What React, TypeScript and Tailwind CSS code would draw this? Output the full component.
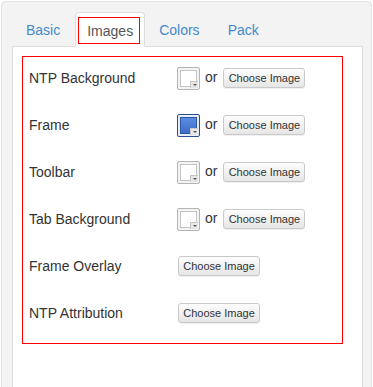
import React from "react";

function Swatch({ blue }: { blue?: boolean }) {
  return (
    <div
      className={
        "relative w-[23px] h-[23px] rounded-[2px] border " +
        (blue
          ? "border-[#2a4f94] bg-[#e8ecf4]"
          : "border-[#b4b4b4] bg-[#f4f4f4]")
      }
    >
      <div
        className={
          "absolute left-[2px] top-[2px] w-[17px] h-[17px] border " +
          (blue
            ? "border-[#2a55a8] bg-gradient-to-b from-[#5d8de0] to-[#3d6cc9]"
            : "border-[#c4c4c4] bg-white")
        }
      />
      <div className="absolute right-[1px] bottom-[1px] w-[8px] h-[7px] bg-[#e6e6e6] border-l border-t border-[#c8c8c8] flex items-center justify-center">
        <div className="w-0 h-0 border-l-[2px] border-r-[2px] border-t-[2px] border-l-transparent border-r-transparent border-t-[#555]" />
      </div>
    </div>
  );
}

function Btn() {
  return (
    <button className="h-[20px] w-[82px] rounded-[3px] border border-[#c9c9c9] bg-gradient-to-b from-[#fdfdfd] to-[#e6e6e6] text-[11px] text-[#333] leading-none shadow-[0_1px_0_rgba(0,0,0,0.06)]">
      Choose Image
    </button>
  );
}

const rows: { label: string; swatch: boolean; blue?: boolean }[] = [
  { label: "NTP Background", swatch: true },
  { label: "Frame", swatch: true, blue: true },
  { label: "Toolbar", swatch: true },
  { label: "Tab Background", swatch: true },
  { label: "Frame Overlay", swatch: false },
  { label: "NTP Attribution", swatch: false },
];

export default function App() {
  return (
    <div
      className="w-[373px] h-[387px] bg-white overflow-hidden pt-px pl-px"
      style={{ fontFamily: '"Liberation Sans", Arial, sans-serif' }}
    >
      <div className="w-[371px] h-[400px] rounded-[4px] border border-[#e3e3e3] bg-[#f3f3f3] pt-[10px] pl-[10px] pr-[8px]">
        <div className="flex gap-[2px] pl-[1px] h-[35px] relative z-10">
          <div className="px-[13px] pt-[8px] text-[14px] text-[#428bca]">Basic</div>
          <div className="relative px-[11px] pt-[8px] text-[14px] text-[#555] bg-white border border-[#ddd] border-b-white rounded-t-[4px] h-[35px]">
            Images
            <div className="absolute left-[2px] right-[4px] top-[4px] h-[27px] border border-[#ff0000]" />
          </div>
          <div className="pl-[12px] pr-[13px] pt-[8px] text-[14px] text-[#428bca]">Colors</div>
          <div className="px-[13px] pt-[8px] text-[14px] text-[#428bca]">Pack</div>
        </div>
        <div className="mt-[-1px] bg-white border border-[#ddd] h-[360px] pt-[9px] pl-[9px]">
          <div className="w-[321px] border border-[#ff0000] pl-[6px] pb-[4px]">
            {rows.map((r) => (
              <div key={r.label} className="h-[47px] pt-[11px] flex items-start">
                <div className="w-[148px] h-[20px] flex items-center text-[14px] text-[#333]">
                  {r.label}
                </div>
                {r.swatch ? (
                  <div className="flex items-center h-[20px]">
                    <Swatch blue={r.blue} />
                    <span className="ml-[5px] mr-[6px] text-[14px] text-[#333] leading-none mb-[2px]">or</span>
                    <Btn />
                  </div>
                ) : (
                  <div className="flex items-center h-[20px] pl-px">
                    <Btn />
                  </div>
                )}
              </div>
            ))}
          </div>
        </div>
      </div>
    </div>
  );
}
